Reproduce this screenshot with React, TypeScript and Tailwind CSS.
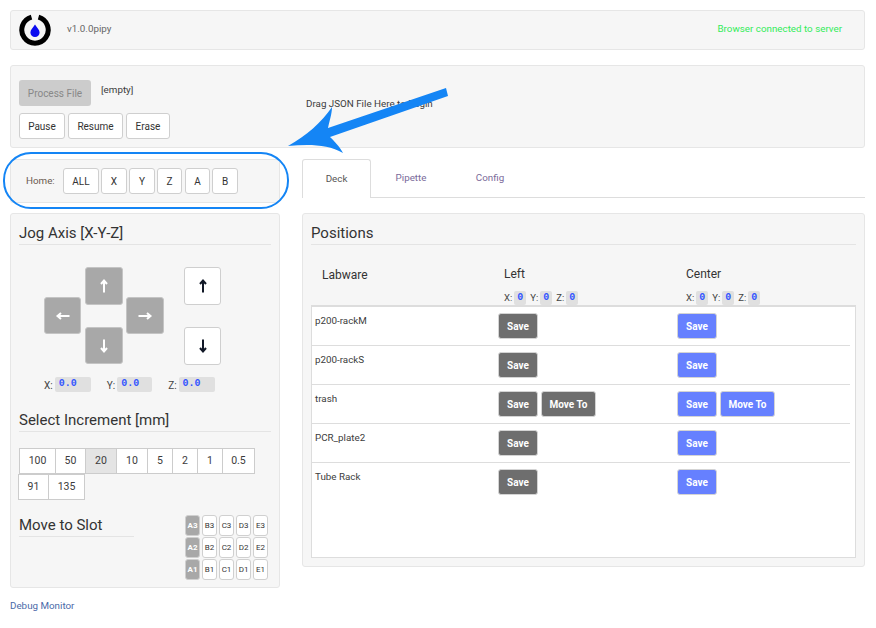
import React from "react";

const INCREMENTS = [
  { label: "100", w: "w-[37px]" },
  { label: "50", w: "w-[31px]" },
  { label: "20", w: "w-[32px]" },
  { label: "10", w: "w-[32px]" },
  { label: "5", w: "w-[26px]" },
  { label: "2", w: "w-[26px]" },
  { label: "1", w: "w-[26px]" },
  { label: "0.5", w: "w-[33px]" },
];

const LABWARE = [
  { name: "p200-rackM", move: false },
  { name: "p200-rackS", move: false },
  { name: "trash", move: true },
  { name: "PCR_plate2", move: false },
  { name: "Tube Rack", move: false },
];

const SLOTS = [
  ["A3", "B3", "C3", "D3", "E3"],
  ["A2", "B2", "C2", "D2", "E2"],
  ["A1", "B1", "C1", "D1", "E1"],
];

function Panel({ className, children }: { className?: string; children: React.ReactNode }) {
  return <div className={`bg-[#f6f6f6] border border-[#e6e6e6] rounded-[3px] ${className ?? ""}`}>{children}</div>;
}

function WhiteBtn({ className, children }: { className?: string; children: React.ReactNode }) {
  return (
    <button className={`h-[26px] bg-white border border-[#cfcfcf] rounded-[3px] text-[10px] text-[#333] flex items-center justify-center ${className ?? ""}`}>
      {children}
    </button>
  );
}

function Heading({ className, children }: { className?: string; children: React.ReactNode }) {
  return (
    <div className={`h-[22px] text-[15px] leading-[20px] text-[#333] border-b border-[#e4e4e4] ${className ?? ""}`}>
      {children}
    </div>
  );
}

function Arrow({ dir, light }: { dir: "up" | "down" | "left" | "right"; light: boolean }) {
  const d = {
    up: "M9 15.5V3.5M6 7L9 3.5 12 7",
    down: "M9 2.5v12M6 11L9 14.5 12 11",
    left: "M15.5 9H3.5M7 6L3.5 9 7 12",
    right: "M2.5 9h12M11 6L14.5 9 11 12",
  }[dir];
  return (
    <svg width="18" height="18" viewBox="0 0 18 18" fill="none" stroke={light ? "#ffffff" : "#111827"} strokeWidth="2">
      <path d={d} />
    </svg>
  );
}

function JogBtn({ dir, className }: { dir: "up" | "down" | "left" | "right"; className: string }) {
  return (
    <button className={`bg-[#a8a8a8] border border-[#c4c4c4] rounded-[3px] flex items-center justify-center ${className}`}>
      <Arrow dir={dir} light />
    </button>
  );
}

function ZBtn({ dir }: { dir: "up" | "down" }) {
  return (
    <button className="w-[37px] h-[38px] bg-white border border-[#cfcfcf] rounded-[3px] flex items-center justify-center">
      <Arrow dir={dir} light={false} />
    </button>
  );
}

function Coord({ label, className }: { label: string; className: string }) {
  return (
    <div className="flex items-end text-[10px] text-[#444]">
      <span className="mr-[2px] leading-[12px]">{label}:</span>
      <span className={`h-[15px] bg-[#e0e0e0] rounded-[2px] pl-[4px] font-['Liberation_Mono',monospace] text-[10px] leading-[13px] font-bold text-[#3355ff] ${className}`}>
        0.0
      </span>
    </div>
  );
}

function MiniCoords({ className }: { className: string }) {
  return (
    <div className={`flex items-center text-[9.5px] text-[#444] gap-[4px] ${className}`}>
      {["X", "Y", "Z"].map((a) => (
        <div key={a} className="flex items-center gap-[2px]">
          <span>{a}:</span>
          <span className="w-[12px] h-[14px] bg-[#e0e0e0] rounded-[2px] text-center font-['Liberation_Mono',monospace] text-[10px] leading-[14px] font-bold text-[#3355ff]">
            0
          </span>
        </div>
      ))}
    </div>
  );
}

function ActionBtn({ blue, className, children }: { blue: boolean; className: string; children: React.ReactNode }) {
  return (
    <button
      className={`h-[26px] rounded-[3px] border border-[#d4d4d4] text-[10px] font-bold text-white flex items-center justify-center ${
        blue ? "bg-[#6680ff]" : "bg-[#6e6e6e]"
      } ${className}`}
    >
      {children}
    </button>
  );
}

export default function App() {
  return (
    <div className="relative w-[876px] h-[628px] overflow-hidden bg-white px-[10px] pt-[10px] font-['Roboto',sans-serif] text-[9.8px] text-[#3c3c3c]">
      {/* Header */}
      <Panel className="w-[855px] h-[40px] flex items-center pl-[8px] pr-[22px]">
        <svg width="32" height="32" viewBox="0 0 32 32" className="shrink-0">
          <path d="M12.5 3.2A13.2 13.2 0 1 0 19.5 3.2" fill="none" stroke="#000" strokeWidth="5" />
          <path d="M16 10.5c2 3.2 4.6 5.3 4.6 8a4.6 4.6 0 0 1-9.2 0c0-2.7 2.6-4.8 4.6-8z" fill="#0a0af0" />
        </svg>
        <span className="ml-[16px] mb-[2px] text-[#666]">v1.0.0pipy</span>
        <span className="ml-auto mb-[2px] text-[#33ec5a]">Browser connected to server</span>
      </Panel>

      {/* File controls */}
      <Panel className="w-[855px] h-[83px] mt-[15px] pl-[8px] pt-[14px] flex">
        <div className="w-[287px] shrink-0">
          <div className="flex items-start">
            <button className="w-[72px] h-[26px] bg-[#cccccc] rounded-[3px] text-[#888] text-[10px]">Process File</button>
            <span className="ml-[10px] mt-[3px]">[empty]</span>
          </div>
          <div className="flex gap-[3px] mt-[7px]">
            <WhiteBtn className="w-[46px]">Pause</WhiteBtn>
            <WhiteBtn className="w-[55px]">Resume</WhiteBtn>
            <WhiteBtn className="w-[44px]">Erase</WhiteBtn>
          </div>
        </div>
        <span className="mt-[17px]">Drag JSON File Here to Begin</span>
      </Panel>

      <div className="flex mt-[10px] gap-[22px]">
        {/* Left column */}
        <div className="w-[270px] shrink-0">
          <Panel className="h-[44px] flex items-center pl-[15px] mt-[1px]">
            <span className="w-[37px] text-[#6b5a50]">Home:</span>
            <div className="flex gap-[2px]">
              <WhiteBtn className="w-[36px]">ALL</WhiteBtn>
              <WhiteBtn className="w-[26px]">X</WhiteBtn>
              <WhiteBtn className="w-[26px]">Y</WhiteBtn>
              <WhiteBtn className="w-[25px] mr-[1px]">Z</WhiteBtn>
              <WhiteBtn className="w-[25px]">A</WhiteBtn>
              <WhiteBtn className="w-[26px]">B</WhiteBtn>
            </div>
          </Panel>

          <Panel className="h-[375px] mt-[10px] px-[8px] pt-[9px]">
            <Heading>Jog Axis [X-Y-Z]</Heading>
            <div className="flex mt-[22px] ml-[25px]">
              <JogBtn dir="left" className="w-[37px] h-[37px] mt-[30px]" />
              <div className="flex flex-col ml-[4px] gap-[22px]">
                <JogBtn dir="up" className="w-[38px] h-[38px]" />
                <JogBtn dir="down" className="w-[38px] h-[37px]" />
              </div>
              <JogBtn dir="right" className="w-[38px] h-[37px] mt-[30px] ml-[3px]" />
              <div className="flex flex-col ml-[20px] gap-[22px]">
                <ZBtn dir="up" />
                <ZBtn dir="down" />
              </div>
            </div>
            <div className="flex mt-[12px] ml-[25px] gap-[16px]">
              <Coord label="X" className="w-[36px]" />
              <Coord label="Y" className="w-[35px]" />
              <Coord label="Z" className="w-[36px]" />
            </div>

            <Heading className="mt-[18px]">Select Increment [mm]</Heading>
            <div className="flex mt-[16px]">
              {INCREMENTS.map((inc) => (
                <div
                  key={inc.label}
                  className={`h-[26px] border border-[#cccccc] -mr-px flex items-center justify-center text-[10.5px] ${inc.w} ${
                    inc.label === "20" ? "bg-[#e4e4e4] border-[#aaaaaa]" : "bg-white"
                  }`}
                >
                  {inc.label}
                </div>
              ))}
            </div>
            <div className="flex -ml-px">
              <div className="w-[31px] h-[26px] bg-white border border-[#cccccc] -mr-px flex items-center justify-center text-[10.5px]">91</div>
              <div className="w-[37px] h-[26px] bg-white border border-[#cccccc] flex items-center justify-center text-[10.5px]">135</div>
            </div>

            <div className="flex justify-between mt-[15px] pr-[3px]">
              <Heading className="w-[115px]">Move to Slot</Heading>
              <div className="flex flex-col gap-px">
                {SLOTS.map((row) => (
                  <div key={row[0]} className="flex gap-[2px]">
                    {row.map((slot) => (
                      <div
                        key={slot}
                        className={`w-[15px] h-[21px] rounded-[3px] border border-[#d0d0d0] flex items-center justify-center text-[8px] ${
                          slot[0] === "A" ? "bg-[#a8a8a8] text-white font-bold" : "bg-white text-[#333]"
                        }`}
                      >
                        {slot}
                      </div>
                    ))}
                  </div>
                ))}
              </div>
            </div>
          </Panel>

          <div className="mt-[11px] text-[#4a6aa8]">Debug Monitor</div>
        </div>

        {/* Right column */}
        <div className="w-[563px] shrink-0">
          <div className="h-[39px] mt-[1px] flex border-b border-[#dddddd]">
            <div className="w-[69px] h-[39px] bg-white border border-[#dddddd] border-b-0 rounded-t-[3px] flex items-center justify-center text-[#555]">Deck</div>
            <div className="w-[80px] h-[38px] flex items-center justify-center text-[#7a6a9a]">Pipette</div>
            <div className="w-[78px] h-[38px] flex items-center justify-center text-[#7a6a9a]">Config</div>
          </div>

          <Panel className="h-[354px] mt-[15px] px-[8px] pt-[9px]">
            <Heading>Positions</Heading>
            <div className="flex h-[60px] pt-[21px] text-[12px] text-[#333]">
              <span className="w-[193px] pl-[11px]">Labware</span>
              <div className="w-[182px]">
                <div className="leading-[16px]">Left</div>
                <MiniCoords className="mt-[9px]" />
              </div>
              <div>
                <div className="leading-[16px]">Center</div>
                <MiniCoords className="mt-[9px]" />
              </div>
            </div>
            <div className="h-[253px] bg-white border border-[#dddddd] border-t-2 pr-[5px]">
              {LABWARE.map((row, i) => (
                <div key={row.name} className={`h-[39px] flex ${i < 4 ? "border-b border-[#dddddd]" : ""}`}>
                  <span className="w-[186px] pl-[3px] pt-[7px]">{row.name}</span>
                  <div className="w-[179px] flex gap-[3px] pt-[6px]">
                    <ActionBtn blue={false} className="w-[40px]">Save</ActionBtn>
                    {row.move && <ActionBtn blue={false} className="w-[55px]">Move To</ActionBtn>}
                  </div>
                  <div className="flex gap-[3px] pt-[6px]">
                    <ActionBtn blue className="w-[40px]">Save</ActionBtn>
                    {row.move && <ActionBtn blue className="w-[55px]">Move To</ActionBtn>}
                  </div>
                </div>
              ))}
            </div>
          </Panel>
        </div>
      </div>

      {/* Annotation drawn over the page */}
      <div className="absolute left-[3px] top-[152px] w-[286px] h-[57px] rounded-[28px] border-2 border-[#1485f5]" />
      <svg className="absolute left-[280px] top-[80px]" width="180" height="80" viewBox="0 0 180 80">
        <path
          d="M166 8L48 48C50 39 52 33 52 27C42 42 26 56 8 66C28 64 48 64 63 73C60 67 54 61 50 57L168 16Z"
          fill="#1485f5"
        />
      </svg>
    </div>
  );
}
